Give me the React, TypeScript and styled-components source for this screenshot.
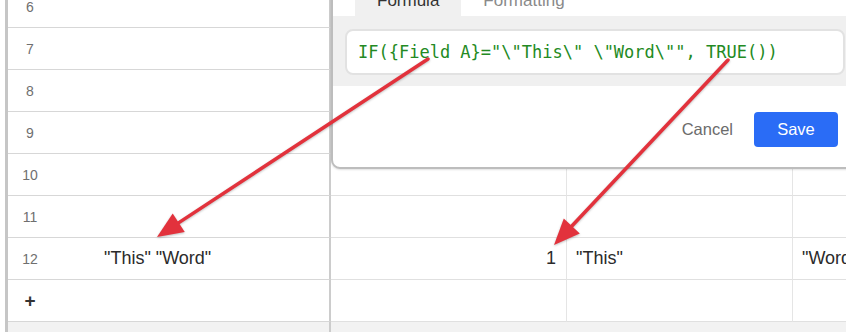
import React from "react";
import styled, { createGlobalStyle } from "styled-components";

const GlobalStyle = createGlobalStyle`
  html, body {
    margin: 0;
    padding: 0;
    background: #ffffff;
  }
  body {
    font-family: "Liberation Sans", Arial, sans-serif;
  }
`;

const Viewport = styled.div`
  position: relative;
  width: 846px;
  height: 332px;
  overflow: hidden;
  padding-left: 5px;
  box-sizing: border-box;
  display: flex;
  background: #ffffff;
`;

const Sheet = styled.div`
  flex: 1;
  min-width: 0;
  display: flex;
  flex-direction: column;
  margin-top: -14px;
  border-left: 3px solid #c6c6c6;
`;

const Row = styled.div`
  display: grid;
  grid-template-columns: 323px 236px 226px 1fr;
  height: 42px;
  flex-shrink: 0;
`;

const LeftPane = styled.div`
  display: flex;
  align-items: center;
  box-sizing: border-box;
  border-right: 2px solid #cccccc;
  border-bottom: 1px solid #d7d7d7;
  min-width: 0;
`;

const RowNumber = styled.span<{ $add?: boolean }>`
  flex: 0 0 44px;
  margin-right: 44px;
  text-align: center;
  font-size: ${(p) => (p.$add ? "19px" : "14px")};
  font-weight: ${(p) => (p.$add ? 700 : 400)};
  color: ${(p) => (p.$add ? "#333333" : "#6f6f6f")};
`;

const PrimaryCell = styled.div`
  flex: 1;
  padding-left: 8px;
  font-size: 18px;
  color: #2b2b2b;
  white-space: nowrap;
  overflow: hidden;
`;

const Cell = styled.div<{ $align?: "left" | "right"; $last?: boolean }>`
  display: flex;
  align-items: center;
  justify-content: ${(p) => (p.$align === "right" ? "flex-end" : "flex-start")};
  box-sizing: border-box;
  padding: ${(p) => (p.$align === "right" ? "0 10px 0 0" : "0 0 0 9px")};
  border-right: ${(p) => (p.$last ? "none" : "1px solid #e5e5e5")};
  border-bottom: 1px solid #e0e0e0;
  font-size: 18px;
  color: #2b2b2b;
  white-space: nowrap;
  overflow: hidden;
  min-width: 0;
`;

const BottomFill = styled.div`
  flex: 1;
  display: grid;
  grid-template-columns: 323px 1fr;
  background: #f2f2f2;
`;

const BottomLeft = styled.div`
  border-right: 2px solid #cccccc;
`;

const Modal = styled.div`
  position: absolute;
  left: 331px;
  top: -16px;
  width: 529px;
  box-sizing: border-box;
  display: flex;
  flex-direction: column;
  background: #ffffff;
  border: 2px solid #bdbdbd;
  border-radius: 9px;
  box-shadow: 0 1px 2px rgba(0, 0, 0, 0.12);
`;

const TabBar = styled.div`
  display: flex;
  height: 30px;
  padding-left: 22px;
`;

const Tab = styled.div<{ $active?: boolean }>`
  display: flex;
  align-items: center;
  padding: 0 22px;
  font-size: 17px;
  color: ${(p) => (p.$active ? "#333333" : "#8a8a8a")};
  background: ${(p) => (p.$active ? "#f0f0f0" : "transparent")};
  border-radius: 6px 6px 0 0;
`;

const EditorPanel = styled.div`
  background: #f0f0f0;
  padding: 13px 13px 11px 12px;
`;

const FormulaBox = styled.div`
  height: 46px;
  box-sizing: border-box;
  display: flex;
  align-items: center;
  padding-left: 11px;
  background: #ffffff;
  border: 2px solid #e2e2e2;
  border-radius: 8px;
  font-family: "DejaVu Sans Mono", "Liberation Mono", monospace;
  font-size: 17px;
  color: #238a23;
  white-space: pre;
`;

const Footer = styled.div`
  display: flex;
  justify-content: flex-end;
  align-items: center;
  gap: 21px;
  padding: 26px 20px 20px;
`;

const CancelButton = styled.button`
  border: none;
  background: none;
  padding: 0;
  font-family: "Liberation Sans", Arial, sans-serif;
  font-size: 16.5px;
  color: #6b6b6b;
`;

const SaveButton = styled.button`
  width: 84px;
  height: 35px;
  border: none;
  border-radius: 4px;
  background: #2a6cf6;
  color: #ffffff;
  font-family: "Liberation Sans", Arial, sans-serif;
  font-size: 16.5px;
`;

const ArrowLayer = styled.svg`
  position: absolute;
  left: 0;
  top: 0;
  width: 846px;
  height: 332px;
  pointer-events: none;
  filter: drop-shadow(0 1px 1px rgba(0, 0, 0, 0.25));
`;

type ArrowProps = { sx: number; sy: number; tx: number; ty: number };

const Arrow = ({ sx, sy, tx, ty }: ArrowProps) => {
  const dx = tx - sx;
  const dy = ty - sy;
  const len = Math.hypot(dx, dy);
  const ux = dx / len;
  const uy = dy / len;
  const headLen = 26;
  const half = 11;
  const bx = tx - ux * headLen;
  const by = ty - uy * headLen;
  const nx = -uy;
  const ny = ux;
  const pts = `${tx},${ty} ${bx + nx * half},${by + ny * half} ${bx - nx * half},${by - ny * half}`;
  return (
    <g>
      <line
        x1={sx}
        y1={sy}
        x2={bx + ux * 3}
        y2={by + uy * 3}
        stroke="#e2323c"
        strokeWidth={3.5}
        strokeLinecap="round"
      />
      <polygon points={pts} fill="#e2323c" />
    </g>
  );
};

type RowData = { n: number; primary?: string; a?: string; b?: string; c?: string };

const rows: RowData[] = [
  { n: 6 },
  { n: 7 },
  { n: 8 },
  { n: 9 },
  { n: 10 },
  { n: 11 },
  { n: 12, primary: '"This" "Word"', a: "1", b: '"This"', c: '"Word"' },
];

export default function App() {
  return (
    <>
      <GlobalStyle />
      <Viewport>
        <Sheet>
          {rows.map((r) => (
            <Row key={r.n}>
              <LeftPane>
                <RowNumber>{r.n}</RowNumber>
                <PrimaryCell>{r.primary}</PrimaryCell>
              </LeftPane>
              <Cell $align="right">{r.a}</Cell>
              <Cell>{r.b}</Cell>
              <Cell $last>{r.c}</Cell>
            </Row>
          ))}
          <Row>
            <LeftPane>
              <RowNumber $add>+</RowNumber>
            </LeftPane>
            <Cell />
            <Cell />
            <Cell $last />
          </Row>
          <BottomFill>
            <BottomLeft />
            <div />
          </BottomFill>
        </Sheet>

        <Modal>
          <TabBar>
            <Tab $active>Formula</Tab>
            <Tab>Formatting</Tab>
          </TabBar>
          <EditorPanel>
            <FormulaBox>{'IF({Field A}="\\"This\\" \\"Word\\"", TRUE())'}</FormulaBox>
          </EditorPanel>
          <Footer>
            <CancelButton>Cancel</CancelButton>
            <SaveButton>Save</SaveButton>
          </Footer>
        </Modal>

        <ArrowLayer viewBox="0 0 846 332">
          <Arrow sx={428} sy={59} tx={157} ty={237} />
          <Arrow sx={728} sy={60} tx={554} ty={245} />
        </ArrowLayer>
      </Viewport>
    </>
  );
}
